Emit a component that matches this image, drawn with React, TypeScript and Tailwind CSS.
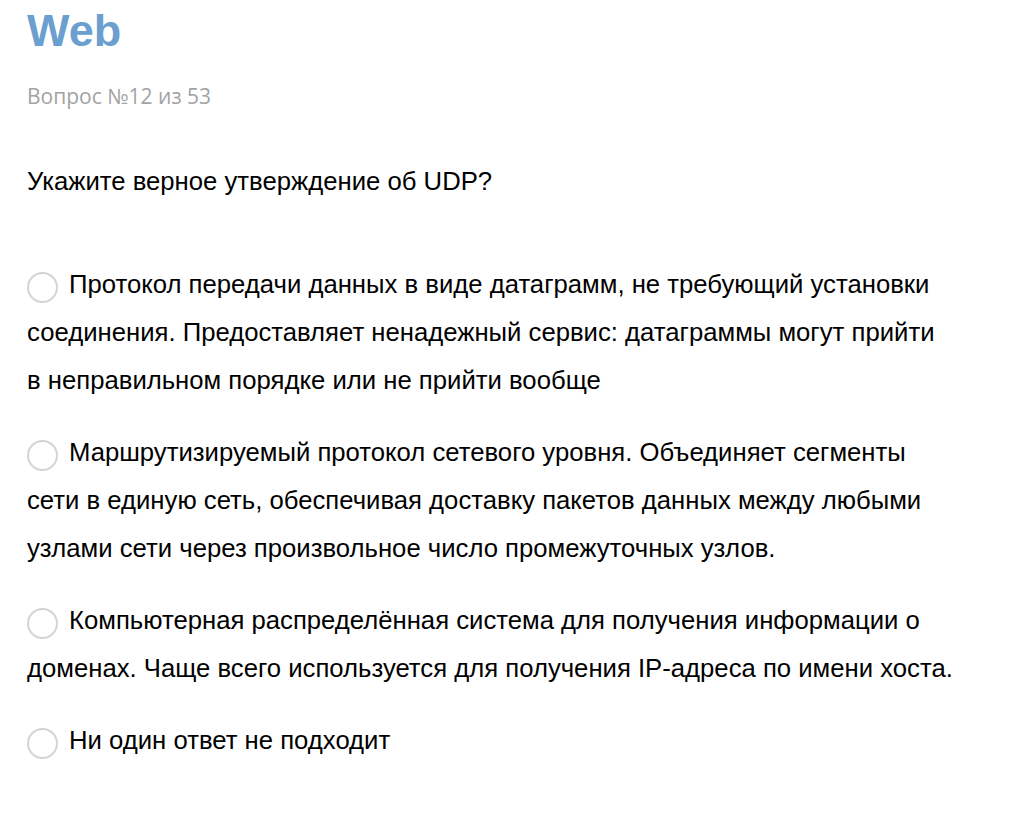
const answers = [
  'Протокол передачи данных в виде датаграмм, не требующий установки соединения. Предоставляет ненадежный сервис: датаграммы могут прийти в неправильном порядке или не прийти вообще',
  'Маршрутизируемый протокол сетевого уровня. Объединяет сегменты сети в единую сеть, обеспечивая доставку пакетов данных между любыми узлами сети через произвольное число промежуточных узлов.',
  'Компьютерная распределённая система для получения информации о доменах. Чаще всего используется для получения IP-адреса по имени хоста.',
  'Ни один ответ не подходит',
]

export default function App() {
  return (
    <div className="min-h-screen bg-white pl-[27px] pr-[20px] pt-[7px] font-['Liberation_Sans',Arial,sans-serif] text-black">
      <h1 className="text-[45px] font-bold leading-[48px] text-[#6a9fd0]">Web</h1>
      <div className="mt-[29px] font-['Open_Sans',sans-serif] text-[21px] leading-[24px] text-[#a3a3a3]">
        Вопрос №12 из 53
      </div>
      <p className="mt-[58px] text-[25.7px] leading-[30px]">Укажите верное утверждение об UDP?</p>
      <div className="mt-[64px] flex max-w-[927px] flex-col gap-[24px]">
        {answers.map((a) => (
          <label key={a} className="block text-[25.7px] leading-[48px]">
            <span className="mr-[11px] inline-block h-[31px] w-[31px] translate-y-[12px] rounded-full border-2 border-[#d4d4d4] align-top" />
            {a}
          </label>
        ))}
      </div>
    </div>
  )
}
